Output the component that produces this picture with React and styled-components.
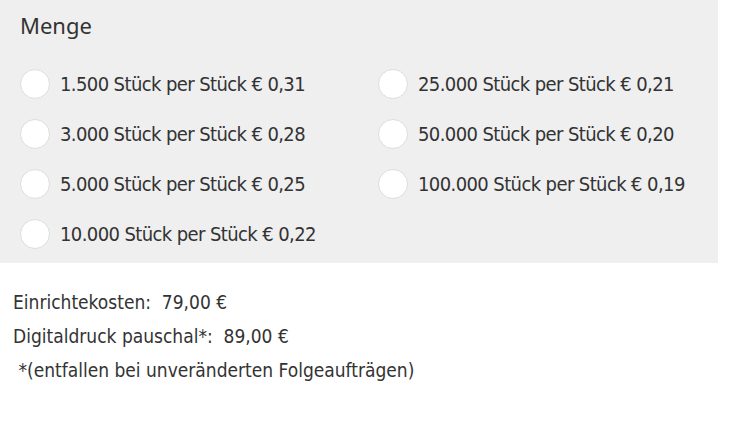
import styled, { createGlobalStyle } from "styled-components";

const GlobalStyle = createGlobalStyle`
  body {
    margin: 0;
    background: #fff;
    color: #333;
  }
`;

const options = [
  ["1.500", "0,31"],
  ["25.000", "0,21"],
  ["3.000", "0,28"],
  ["50.000", "0,20"],
  ["5.000", "0,25"],
  ["100.000", "0,19"],
  ["10.000", "0,22"],
];

function App() {
  return (
    <Page>
      <GlobalStyle />
      <Panel>
        <Title>Menge</Title>
        <OptionGrid>
          {options.map(([qty, price]) => (
            <Option key={qty}>
              <Radio type="radio" name="menge" />
              <Label>
                {qty} Stück per Stück € {price}
              </Label>
            </Option>
          ))}
        </OptionGrid>
      </Panel>
      <Costs>
        <Line>Einrichtekosten:&nbsp; 79,00 €</Line>
        <Line>Digitaldruck pauschal*:&nbsp; 89,00 €</Line>
        <Line>&nbsp;*(entfallen bei unveränderten Folgeaufträgen)</Line>
      </Costs>
    </Page>
  );
}

const Page = styled.div`
  width: 730px;
  height: 424px;
  font-family: "Liberation Sans Narrow", "DejaVu Sans Condensed", "Liberation Sans", sans-serif;
`;

const Panel = styled.section`
  width: 718px;
  height: 263px;
  box-sizing: border-box;
  background: #efefef;
  padding: 11px 20px 0 20px;
`;

const Title = styled.h3`
  margin: 0;
  font-family: "Noto Sans", sans-serif;
  font-weight: 400;
  font-size: 22px;
  line-height: 28px;
  color: #333;
`;

const OptionGrid = styled.div`
  display: grid;
  grid-template-columns: 358px auto;
  row-gap: 20px;
  margin-top: 30px;
`;

const Option = styled.label`
  display: flex;
  align-items: center;
  gap: 10px;
  height: 30px;
  cursor: pointer;
`;

const Radio = styled.input`
  appearance: none;
  margin: 0;
  width: 30px;
  height: 30px;
  border-radius: 50%;
  background: #fff;
  border: 1px solid #ddd;
  box-sizing: border-box;
  flex-shrink: 0;
`;

const Label = styled.span`
  font-size: 20px;
  letter-spacing: -0.6px;
  color: #333;
  white-space: nowrap;
`;

const Costs = styled.div`
  padding: 22px 0 0 13px;
`;

const Line = styled.div`
  font-size: 19px;
  line-height: 34px;
  color: #333;
  white-space: pre;
`;

export default App;
